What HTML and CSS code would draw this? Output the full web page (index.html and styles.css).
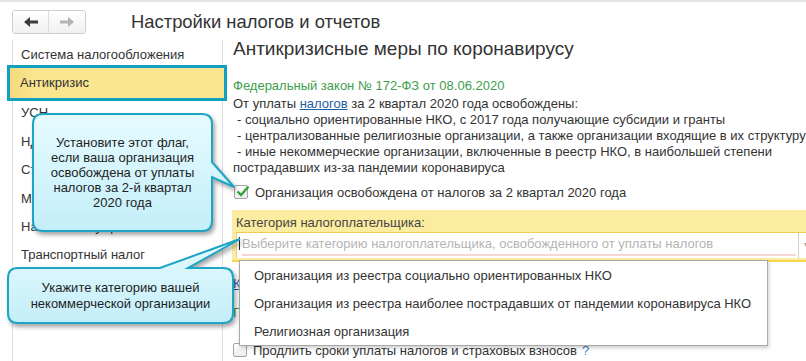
FILE: index.html
```html
<!DOCTYPE html>
<html lang="ru">
<head>
    <meta charset="UTF-8">
    <title>Настройки налогов и отчетов</title>
    <link rel="stylesheet" href="styles.css">
</head>
<body>
    <div class="window">
        <div class="topbar">
            <div class="nav">
                <button class="nav-btn back">
                    <svg width="16" height="12" viewBox="0 0 16 12"><path d="M1 6 L7 1 V4.5 H15 V7.5 H7 V11 Z" fill="#3c3c3c"/></svg>
                </button>
                <button class="nav-btn fwd">
                    <svg width="16" height="12" viewBox="0 0 16 12"><path d="M15 6 L9 1 V4.5 H1 V7.5 H9 V11 Z" fill="#b4b4b4"/></svg>
                </button>
            </div>
            <h1 class="title">Настройки налогов и отчетов</h1>
        </div>

        <div class="main">
            <!-- Sections list -->
            <ul class="sidebar">
                <li>Система налогообложения</li>
                <li class="active">Антикризис</li>
                <li>УСН</li>
                <li>НДС</li>
                <li>Страховые взносы</li>
                <li>Минимальная зарплата</li>
                <li>Налог на имущество</li>
                <li>Транспортный налог</li>
            </ul>

            <div class="content">
                <h2>Антикризисные меры по коронавирусу</h2>
                <div class="law">Федеральный закон № 172-ФЗ от 08.06.2020</div>
                <div class="text">
                    <div>От уплаты <a href="#">налогов</a> за 2 квартал 2020 года освобождены:</div>
                    <div class="dash">- социально ориентированные НКО, с 2017 года получающие субсидии и гранты</div>
                    <div class="dash">- централизованные религиозные организации, а также организации входящие в их структуру</div>
                    <div class="dash">- иные некоммерческие организации, включенные в реестр НКО, в наибольшей степени</div>
                    <div>пострадавших из-за пандемии коронавируса</div>
                </div>

                <label class="check-row first">
                    <span class="checkbox checked">
                        <svg width="14" height="12" viewBox="0 0 14 12"><path d="M1.5 6.5 L5 10 L12.5 1.5" fill="none" stroke="#36a03c" stroke-width="2.4"/></svg>
                    </span>
                    Организация освобождена от налогов за 2 квартал 2020 года
                </label>

                <div class="category">
                    <div class="category-label">Категория налогоплательщика:</div>
                    <div class="input-row">
                        <div class="field">
                            <span class="caret"></span>
                            <span class="placeholder">Выберите категорию налогоплательщика, освобожденного от уплаты налогов</span>
                        </div>
                        <div class="drop-btn">▾</div>
                    </div>

                    <ul class="popup">
                        <li>Организация из реестра социально ориентированных НКО</li>
                        <li>Организация из реестра наиболее пострадавших от пандемии коронавируса НКО</li>
                        <li>Религиозная организация</li>
                    </ul>
                </div>

                <a class="more" href="#">Как применить освобождение</a>
                <div class="law second">Государственная поддержка</div>

                <label class="check-row last">
                    <span class="checkbox"></span>
                    Продлить сроки уплаты налогов и страховых взносов <span class="hint">?</span>
                </label>
            </div>
        </div>

        <!-- Hint callouts -->
        <div class="callout callout-flag">
            <svg class="callout-bg" width="179" height="117">
                <defs>
                    <linearGradient id="cf1" x1="0" y1="0" x2="0" y2="1">
                        <stop offset="0" stop-color="#e6fbff"/>
                        <stop offset="1" stop-color="#c4eef9"/>
                    </linearGradient>
                </defs>
                <path d="M10,0 H169 Q179,0 179,10 V48 L201,73 L179,63 V107 Q179,117 169,117 H10 Q0,117 0,107 V10 Q0,0 10,0 Z" fill="url(#cf1)" stroke="#1ea4c4" stroke-width="2"/>
            </svg>
            <div class="callout-text">Установите этот флаг,<br>если ваша организация<br>освобождена от уплаты<br>налогов за 2-й квартал<br>2020 года</div>
        </div>

        <div class="callout callout-cat">
            <svg class="callout-bg" width="225" height="55">
                <defs>
                    <linearGradient id="cf2" x1="0" y1="0" x2="0" y2="1">
                        <stop offset="0" stop-color="#e6fbff"/>
                        <stop offset="1" stop-color="#c4eef9"/>
                    </linearGradient>
                </defs>
                <path d="M10,0 H152 L232,-29 L180,0 H215 Q225,0 225,10 V45 Q225,55 215,55 H10 Q0,55 0,45 V10 Q0,0 10,0 Z" fill="url(#cf2)" stroke="#1ea4c4" stroke-width="2"/>
            </svg>
            <div class="callout-text">Укажите категорию вашей<br>некоммерческой организации</div>
        </div>
    </div>
</body>
</html>
```

FILE: styles.css
```css
body {
    margin: 0;
    font-family: "Liberation Sans", Arial, sans-serif;
    font-size: 13px;
    color: #333;
    background: #fff;
    overflow: hidden;
}
.window {
    position: relative;
    width: 806px;
    height: 361px;
    overflow: hidden;
    border-top: 2px solid #e4e4e4;
    box-sizing: border-box;
}
.topbar {
    display: flex;
    align-items: center;
    height: 34px;
    padding: 6px 0 0 12px;
    box-sizing: border-box;
}
.nav {
    display: flex;
    border: 1px solid #cfcfcf;
    border-radius: 3px;
    overflow: hidden;
}
.nav-btn {
    width: 36px;
    height: 22px;
    padding: 0;
    border: none;
    background: linear-gradient(#ffffff, #f1f1f1);
    display: flex;
    align-items: center;
    justify-content: center;
}
.nav-btn.back {
    border-right: 1px solid #dcdcdc;
}
.title {
    margin: 0 0 0 45px;
    font-size: 18.4px;
    font-weight: normal;
    color: #333;
    line-height: 22px;
}
.main {
    display: flex;
}
.sidebar {
    flex-shrink: 0;
    list-style: none;
    margin: 4px 0 0 12px;
    padding: 0;
    width: 209px;
    height: 330px;
    border-left: 1px solid #dedede;
    border-right: 1px solid #dedede;
}
.sidebar li {
    height: 28.4px;
    line-height: 30px;
    padding-left: 8px;
    white-space: nowrap;
    overflow: hidden;
}
.sidebar li.active {
    margin: 0 -2px 0 -3px;
    padding-left: 10px;
    height: 30px;
    line-height: 30px;
    background: linear-gradient(90deg, #f3da7c, #fae68f 12%, #fae68f);
    outline: 3px solid #12a0c2;
    position: relative;
}
.content {
    flex: 1;
    min-width: 0;
    padding-left: 10px;
}
h2 {
    margin: 0;
    font-size: 19px;
    font-weight: normal;
    line-height: 25px;
    color: #333;
    white-space: nowrap;
}
.law {
    margin-top: 17px;
    line-height: 16px;
    color: #3e9e4c;
}
.text {
    margin-top: 2px;
    line-height: 16px;
    white-space: nowrap;
}
.text a, .more {
    color: #1c5ca6;
}
.dash {
    padding-left: 4px;
}
.check-row {
    display: flex;
    align-items: center;
    gap: 7px;
    height: 18px;
    white-space: nowrap;
}
.check-row.first {
    margin-top: 7px;
    margin-left: 1px;
}
.check-row.last {
    margin-top: 20px;
    margin-left: 0;
    gap: 6px;
}
.checkbox {
    width: 12px;
    height: 12px;
    border: 1px solid #a4a4a4;
    border-radius: 2px;
    background: linear-gradient(#ffffff, #ececec);
    position: relative;
    flex-shrink: 0;
}
.checkbox svg {
    position: absolute;
    left: 1px;
    top: -1px;
}
.hint {
    color: #4a7fc0;
    margin-left: -1px;
}
.category {
    position: relative;
    margin-top: 9px;
    margin-left: -1px;
    padding: 5px 0 2px 0;
    background: #fcec9f;
    border-bottom: 2px solid #f6d64e;
}
.category-label {
    padding-left: 4px;
    line-height: 16px;
    color: #444;
}
.input-row {
    display: flex;
    margin: 1px 0 0 4px;
    width: 590px;
    height: 25px;
    border-top: 1px solid #efcf4f;
}
.field {
    display: flex;
    align-items: stretch;
    width: 562px;
    flex-shrink: 0;
    padding: 0 2px 2px 2px;
    box-sizing: border-box;
    background: #fff;
    border-left: 1px solid #e2d39a;
}
.caret {
    width: 1px;
    margin: 4px 2px 6px 0;
    background: #222;
}
.placeholder {
    flex: 1;
    line-height: 22px;
    color: #b4b4b4;
    white-space: nowrap;
    overflow: hidden;
    border-bottom: 2px solid #f9d6d6;
}
.drop-btn {
    width: 22px;
    background: #fff;
    border-left: 1px solid #cfcfcf;
    color: #999;
    font-size: 10px;
    line-height: 24px;
    padding-left: 5px;
}
.popup {
    position: absolute;
    left: 7px;
    top: 100%;
    margin: 0;
    padding: 0;
    list-style: none;
    width: 527px;
    background: #fff;
    border: 1px solid #a9a9a9;
    box-shadow: 1px 2px 4px rgba(0, 0, 0, 0.2);
    z-index: 2;
}
.popup li {
    height: 28px;
    line-height: 29px;
    padding-left: 14px;
    white-space: nowrap;
}
.more {
    display: block;
    margin-top: 14px;
    line-height: 16px;
}
.law.second {
    margin-top: 13px;
}
.callout {
    position: absolute;
    display: flex;
    align-items: center;
    justify-content: center;
    text-align: center;
    color: #1e1e1e;
    z-index: 3;
}
.callout-bg {
    position: absolute;
    left: 0;
    top: 0;
    overflow: visible;
    filter: drop-shadow(2px 3px 2px rgba(0, 0, 0, 0.35));
}
.callout-text {
    position: relative;
}
.callout-flag {
    left: 33px;
    top: 112px;
    width: 179px;
    height: 117px;
    line-height: 15px;
}
.callout-cat {
    left: 8px;
    top: 266px;
    width: 225px;
    height: 55px;
    line-height: 16px;
}
```
